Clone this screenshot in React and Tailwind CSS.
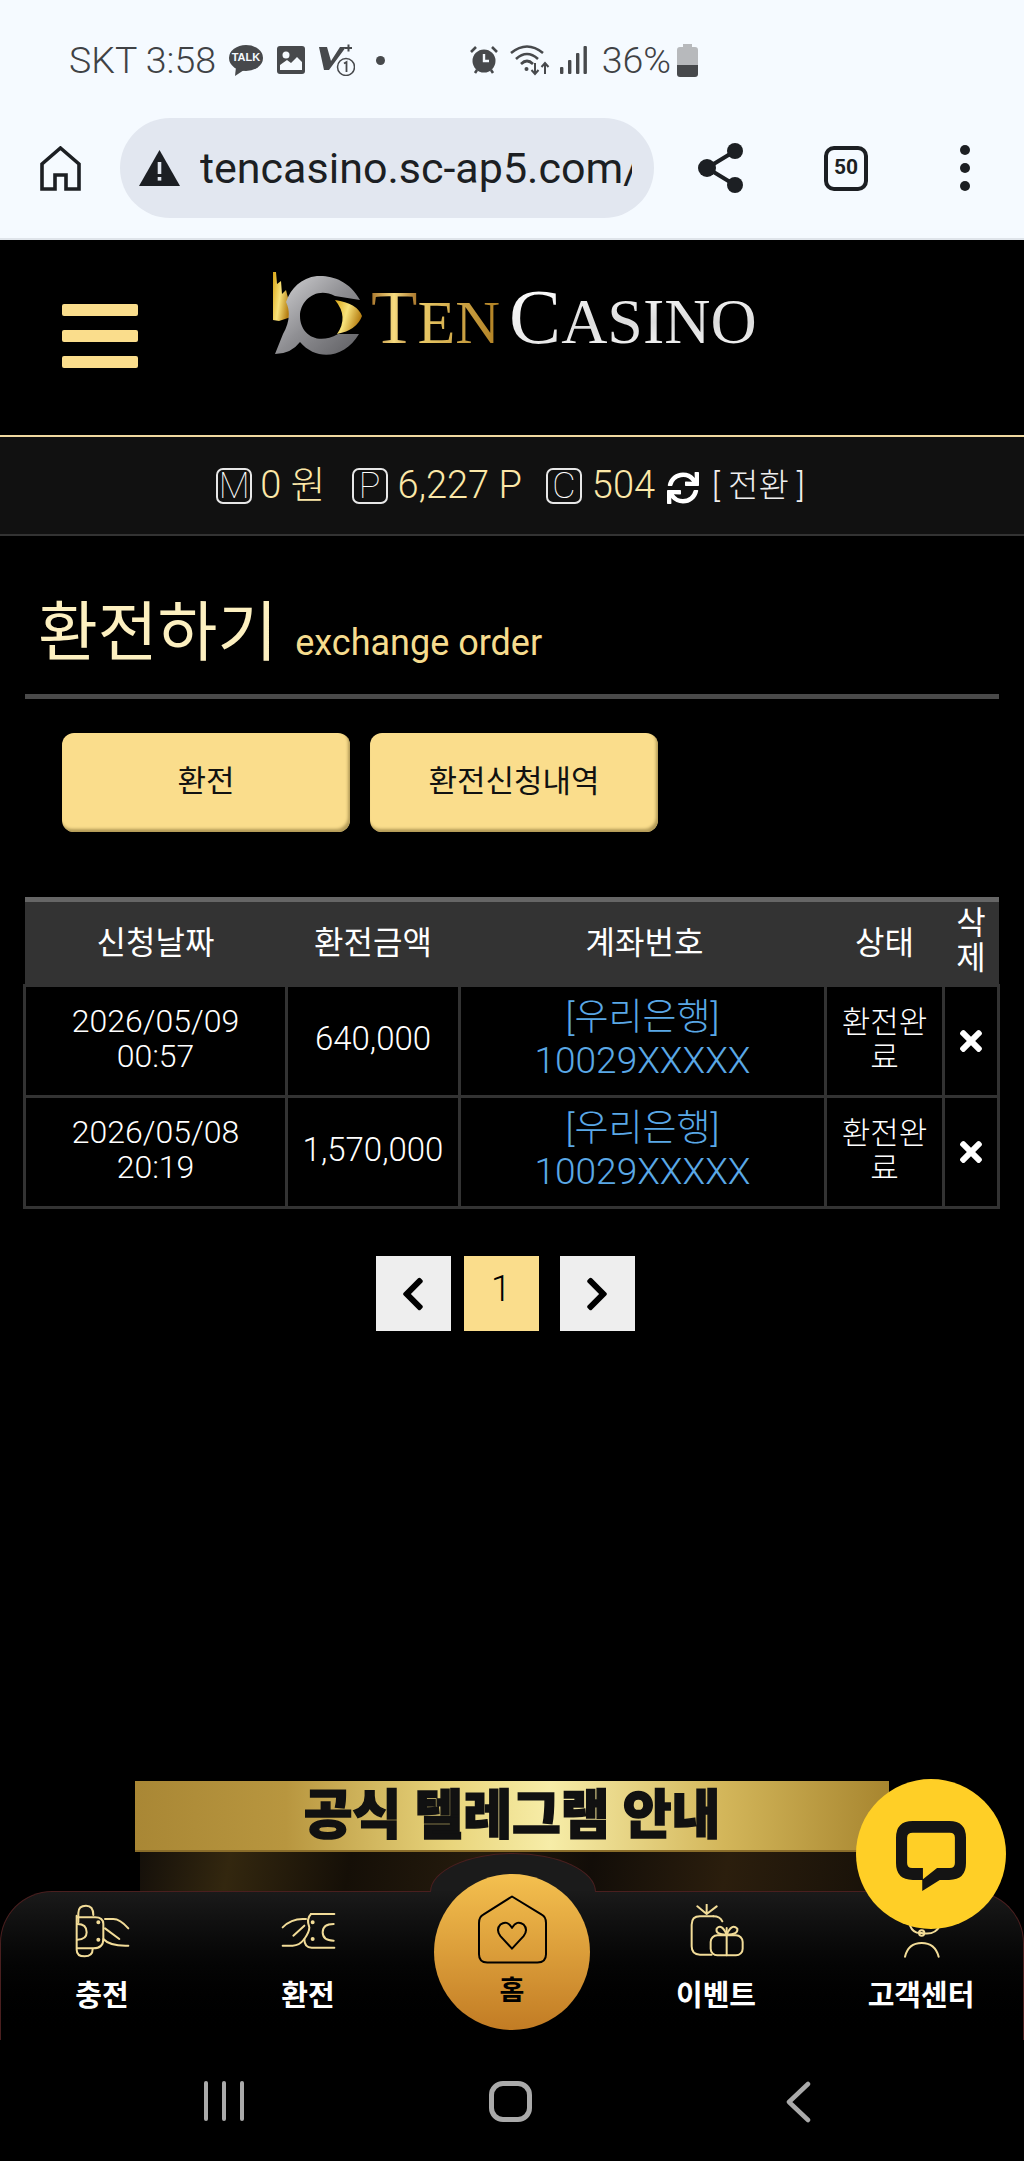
import React from "react";
import { FaSync, FaTimes, FaChevronLeft, FaChevronRight } from "react-icons/fa";

const Gold = "#f2dc98";

function KakaoIcon() {
  return (
    <div className="relative w-[34px] h-[31px] ml-[13px]">
      <svg width="34" height="31" viewBox="0 0 34 31">
        <ellipse cx="17" cy="13" rx="17" ry="13" fill="#47494c" />
        <path d="M7 22 L6 31 L15 25 Z" fill="#47494c" />
      </svg>
      <span className="absolute left-0 top-[5px] w-[34px] text-center text-[11px] leading-[15px] font-bold text-[#f5faff] font-['Liberation_Sans',sans-serif]">TALK</span>
    </div>
  );
}

function StatusLeft() {
  return (
    <div className="flex items-center">
      <span className="text-[37.500px] leading-[40px] font-light text-[#3f4245]">SKT 3:58</span>
      <KakaoIcon />
      <svg className="ml-[14px]" width="28" height="28" viewBox="0 0 28 28">
        <rect width="28" height="28" rx="3" fill="#47494c" />
        <circle cx="9" cy="9" r="3.5" fill="#f5faff" />
        <path d="M3 24 V19 L10 14 L14 17 L20 11 L25 16 V24 Z" fill="#f5faff" />
      </svg>
      <svg className="ml-[14px]" width="36" height="32" viewBox="0 0 36 32">
        <path d="M0 3 H8 L12 17 L21 3 H27 L10 26 H5 Z" fill="#47494c" />
        <path d="M26 4 H33 M29.5 0.5 V7.500" stroke="#47494c" strokeWidth="2" />
        <circle cx="27" cy="23" r="8.500" fill="#f5faff" stroke="#47494c" strokeWidth="1.5" />
        <path d="M25 19.500 L27.500 18 V28" stroke="#47494c" strokeWidth="1.8" fill="none" />
      </svg>
      <span className="ml-[21px] w-[9px] h-[9px] rounded-full bg-[#47494c]" />
    </div>
  );
}

function StatusRight() {
  return (
    <div className="flex items-center">
      <svg width="30" height="30" viewBox="0 0 30 30">
        <circle cx="15" cy="16" r="11.5" fill="#47494c" />
        <path d="M15 9 V16 H20" stroke="#f5faff" strokeWidth="2.4" fill="none" />
        <path d="M2 7 L7 2 M28 7 L23 2 M6 28 L8 25 M24 28 L22 25" stroke="#47494c" strokeWidth="2.6" />
      </svg>
      <svg className="ml-[11px]" width="40" height="32" viewBox="0 0 40 32">
        <path d="M1 9 Q17 -4 33 9" stroke="#47494c" strokeWidth="2.6" fill="none" />
        <path d="M6 15 Q17 5 28 15" stroke="#47494c" strokeWidth="2.6" fill="none" />
        <path d="M11 20 Q17 14 23 20" stroke="#47494c" strokeWidth="2.6" fill="none" />
        <circle cx="16.500" cy="25" r="2" fill="#47494c" />
        <path d="M25 19 V30 M21.500 26 L25 30 L28.500 26 M35 30 V19 M31.500 23 L35 19 L38.500 23" stroke="#47494c" strokeWidth="2" fill="none" />
      </svg>
      <svg className="ml-[10px]" width="27" height="29" viewBox="0 0 27 29">
        <rect x="0" y="21" width="3.400" height="7" rx="1" fill="#47494c" />
        <rect x="8" y="14" width="3.400" height="14" rx="1" fill="#47494c" />
        <rect x="16" y="7" width="3.400" height="21" rx="1" fill="#47494c" />
        <rect x="23.500" y="0" width="3.400" height="28" rx="1" fill="#47494c" />
      </svg>
      <span className="ml-[15px] text-[37.500px] leading-[40px] font-light text-[#3f4245]">36%</span>
      <svg className="ml-[6px]" width="21" height="33" viewBox="0 0 21 33">
        <path d="M6 0 H15 V3 H18 Q21 3 21 6 V21 H0 V6 Q0 3 3 3 H6 Z" fill="#b7b9bc" />
        <path d="M0 21 H21 V30 Q21 33 18 33 H3 Q0 33 0 30 Z" fill="#47494c" />
      </svg>
    </div>
  );
}

function BrowserBar() {
  return (
    <div className="flex items-center h-[100px] mt-[38px]">
      <svg className="ml-[40px]" width="41" height="45" viewBox="0 0 41 45">
        <path d="M20.500 2 L39 18 V43 H26 V29 H15 V43 H2 V18 Z" fill="none" stroke="#1c1f23" strokeWidth="3.600" strokeLinejoin="miter" />
      </svg>
      <div className="ml-[39px] w-[534px] h-[100px] rounded-[50px] bg-[#e2e7f0] flex items-center pl-[19px] pr-[19px] overflow-hidden">
        <svg className="shrink-0" width="41" height="36" viewBox="0 0 41 36">
          <path d="M20.500 0 L41 36 H0 Z" fill="#1c1f23" />
          <rect x="18.700" y="12" width="3.600" height="12" fill="#e2e7f0" />
          <rect x="18.700" y="27" width="3.600" height="3.600" fill="#e2e7f0" />
        </svg>
        <div className="ml-[20px] w-[432px] overflow-hidden whitespace-nowrap text-[43px] leading-[60px] text-[#1c1f23]">tencasino.sc-ap5.com/</div>
      </div>
      <svg className="ml-[44px]" width="46" height="50" viewBox="0 0 46 50">
        <path d="M37 8 L9 25 L37 42" fill="none" stroke="#1c1f23" strokeWidth="4" />
        <circle cx="37" cy="8" r="8" fill="#1c1f23" />
        <circle cx="9" cy="25" r="9" fill="#1c1f23" />
        <circle cx="37" cy="42" r="8" fill="#1c1f23" />
      </svg>
      <div className="ml-[80px] w-[44px] h-[45px] rounded-[10px] border-[4px] border-[#1c1f23] flex items-center justify-center text-[21px] font-bold text-[#1c1f23]">50</div>
      <div className="ml-[92px] flex flex-col gap-[8px]">
        <span className="w-[10px] h-[10px] rounded-full bg-[#1c1f23]" />
        <span className="w-[10px] h-[10px] rounded-full bg-[#1c1f23]" />
        <span className="w-[10px] h-[10px] rounded-full bg-[#1c1f23]" />
      </div>
    </div>
  );
}

function Logo() {
  return (
    <div className="flex items-start ml-[135px] mt-[32px]">
      <svg width="92" height="86" viewBox="0 0 92 86">
        <defs>
          <linearGradient id="lg" x1="0" y1="0" x2="1" y2="0.4">
            <stop offset="0" stopColor="#d9a514" />
            <stop offset="0.5" stopColor="#f8e27a" />
            <stop offset="1" stopColor="#b57e12" />
          </linearGradient>
          <linearGradient id="lgs" x1="0" y1="0" x2="1" y2="1">
            <stop offset="0" stopColor="#d6d6d8" />
            <stop offset="0.5" stopColor="#8f8f93" />
            <stop offset="1" stopColor="#5d5d61" />
          </linearGradient>
        </defs>
        <path d="M0 0 L3 0 L4 12 L8 9 L9 22 L13 18 C16 30 18 34 18 45 L6 49 L0 48 Z" fill="url(#lg)" />
        <path d="M87 28 C76 8 58 3 44 4 C28 6 18 16 13 30 C18 40 16 52 10 62 L2 82 Q18 82 27 70 C44 90 72 86 86 62 L65 62 C44 74 27 62 27 44 C27 28 44 14 62 24 Z" fill="url(#lgs)" />
        <path d="M62 28 Q84 31 89 44 Q84 58 64 62 Q76 45 62 28 Z" fill="url(#lg)" />
      </svg>
      <div className="ml-[6px] mt-[5px] flex items-baseline font-['Liberation_Serif',serif] whitespace-nowrap leading-[80px]">
        <span className="text-[76px] leading-[80px] bg-gradient-to-r from-[#a8752a] via-[#f7dc80] to-[#a8752a] bg-clip-text text-transparent">T</span>
        <span className="text-[62px] leading-[80px] bg-gradient-to-r from-[#eccd6a] to-[#b07f20] bg-clip-text text-transparent">EN</span>
        <span className="ml-[9px] text-[78px] leading-[80px] bg-gradient-to-b from-[#ffffff] to-[#e4e4e4] bg-clip-text text-transparent">C</span>
        <span className="text-[64px] leading-[80px] bg-gradient-to-b from-[#ffffff] via-[#dcdcdc] to-[#ffffff] bg-clip-text text-transparent">ASINO</span>
      </div>
    </div>
  );
}

function Header() {
  return (
    <div className="flex items-start h-[195px] bg-black">
      <div className="ml-[62px] mt-[64px] flex flex-col gap-[14px]">
        <span className="block w-[76px] h-[12px] rounded-[2px] bg-[#fadd8c]" />
        <span className="block w-[76px] h-[12px] rounded-[2px] bg-[#fadd8c]" />
        <span className="block w-[76px] h-[12px] rounded-[2px] bg-[#fadd8c]" />
      </div>
      <Logo />
    </div>
  );
}

function Badge({ c }) {
  return <span className="w-[36px] h-[36px] rounded-[7px] border-2 border-white/90 flex items-center justify-center text-[36px] font-thin text-white leading-none font-['Roboto',sans-serif]">{c}</span>;
}

function Balance() {
  return (
    <div className="flex items-center justify-center h-[101px] border-t-2 border-b-2 border-t-[#f0d9a0] border-b-[#333333] bg-[#111111] pr-[3px]">
      <Badge c="M" />
      <span className="ml-[8px] text-[38px] font-light text-[#fce8a8] whitespace-nowrap">0 원</span>
      <span className="ml-[26px]"><Badge c="P" /></span>
      <span className="ml-[10px] text-[38px] font-light text-[#fce8a8] whitespace-nowrap">6,227 P</span>
      <span className="ml-[24px]"><Badge c="C" /></span>
      <span className="ml-[10px] text-[38px] font-light text-[#fce8a8]">504</span>
      <FaSync className="ml-[12px] mt-[5px] text-white" size={32} />
      <span className="ml-[13px] text-[33px] font-light text-[#eeeeee] whitespace-nowrap">[ 전환 ]</span>
    </div>
  );
}

const rows = [
  { d: "2026/05/09", t: "00:57", a: "640,000" },
  { d: "2026/05/08", t: "20:19", a: "1,570,000" },
];

function Table() {
  return (
    <table className="ml-[23px] mt-[65px] w-[974px] table-fixed border-collapse text-white">
      <colgroup>
        <col className="w-[262px]" />
        <col className="w-[173px]" />
        <col className="w-[366px]" />
        <col className="w-[118px]" />
        <col className="w-[55px]" />
      </colgroup>
      <thead>
        <tr className="bg-[#333333] border-t-[5px] border-t-[#666666] h-[86px] text-[32px] leading-[38px] font-normal">
          <th className="font-normal">신청날짜</th>
          <th className="font-normal">환전금액</th>
          <th className="font-normal pl-[4px]">계좌번호</th>
          <th className="font-normal">상태</th>
          <th className="font-normal break-all leading-[35px] px-[10px] pb-[4px]">삭제</th>
        </tr>
      </thead>
      <tbody>
        {rows.map((r) => (
          <tr key={r.d} className="h-[111px]">
            <td className="border-[3px] border-[#333333] text-center text-[32px] leading-[35px] font-light pb-[5px]">{r.d}<br />{r.t}</td>
            <td className="border-[3px] border-[#333333] text-center text-[33px] font-light pb-[5px]">{r.a}</td>
            <td className="border-[3px] border-[#333333] text-center text-[37px] leading-[43px] font-light text-[#5aa8e6] pb-[5px]">[우리은행]<br />10029XXXXX</td>
            <td className="border-[3px] border-[#333333] text-center text-[31px] leading-[35px] font-light break-all px-[10px] pb-[3px]">환전완료</td>
            <td className="border-[3px] border-[#333333]"><FaTimes className="mx-auto text-white" size={32} /></td>
          </tr>
        ))}
      </tbody>
    </table>
  );
}

function Pagination() {
  return (
    <div className="flex justify-center mt-[47px] pr-[14px]">
      <div className="w-[75px] h-[75px] bg-[#eeeeee] flex items-center justify-center"><FaChevronLeft size={38} className="text-black" /></div>
      <div className="ml-[13px] w-[75px] h-[75px] bg-[#fadd8c] flex justify-center pt-[8px] text-[36px] leading-[50px] font-light text-black">1</div>
      <div className="ml-[21px] w-[75px] h-[75px] bg-[#eeeeee] flex items-center justify-center"><FaChevronRight size={38} className="text-black" /></div>
    </div>
  );
}

function NavIcon({ children, vb, w = 55, h = 55 }) {
  return (
    <svg width={w} height={h} viewBox={vb} fill="none" stroke={Gold} strokeWidth="6" strokeLinecap="round" strokeLinejoin="round">{children}</svg>
  );
}

function NavItem({ icon, label, x }) {
  return (
    <div className={`flex flex-col items-center w-[180px] ${x}`}>
      <div className="h-[55px] flex items-center justify-center">{icon}</div>
      <span className="mt-[20px] text-[29px] leading-[34px] font-bold text-white whitespace-nowrap">{label}</span>
    </div>
  );
}

function BottomNav() {
  return (
    <div className="absolute left-0 bottom-0 w-[1024px] h-[149px] rounded-t-[52px] border border-b-0 border-[#4a1f1f] bg-gradient-to-b from-[#1a1a1a] to-[#000000]">
      <div className="absolute left-[429px] top-[-39px] w-[166px] h-[39px] rounded-tl-[83px_39px] rounded-tr-[83px_39px] border border-b-0 border-[#4a1f1f] bg-[#1b1b1b]" />
      <div className="absolute left-[430px] top-[-1px] w-[164px] h-[2px] bg-[#1a1a1a]" />
      <div className="relative flex pt-[12px]">
        <NavItem
          x="ml-[11px]"
          label="충전"
          icon={
            <NavIcon vb="45 45 165 165">
              <path d="M55 100 V72 Q55 50 78 50 Q100 50 100 78" />
              <path d="M50 80 V182 Q50 202 74 202 Q98 202 98 180" />
              <path d="M52 85 H105 Q130 85 130 105 V150 Q130 178 100 178 H52" />
              <path d="M52 105 Q80 105 80 130 Q80 152 52 152" />
              <circle cx="115" cy="100" r="3" fill={Gold} />
              <circle cx="115" cy="152" r="3" fill={Gold} />
              <path d="M135 90 H160 Q180 90 205 118" />
              <path d="M135 118 L178 150" />
              <path d="M130 150 Q150 172 205 170" />
            </NavIcon>
          }
        />
        <NavItem
          x="ml-[26px]"
          label="환전"
          icon={
            <NavIcon vb="660 45 165 165">
              <path d="M750 75 H820" />
              <path d="M820 176 H752 Q730 176 730 150 Q745 130 745 115 Q735 90 750 75" />
              <circle cx="755" cy="100" r="3" fill={Gold} />
              <circle cx="755" cy="150" r="3" fill={Gold} />
              <path d="M818 105 Q785 105 785 130 Q785 155 818 155" />
              <path d="M665 115 Q690 90 725 90 H735" />
              <path d="M697 140 L730 110" />
              <path d="M665 170 H695 Q715 170 730 150" />
            </NavIcon>
          }
        />
        <NavItem
          x="ml-[228px]"
          label="이벤트"
          icon={
            <NavIcon vb="687 78 165 165">
              <path d="M760 115 H720 Q695 115 695 140 V205 Q695 230 720 230 H755" />
              <path d="M760 115 Q780 115 787 130" />
              <path d="M740 108 L712 85 M740 108 L740 80 M740 108 L770 85" />
              <rect x="752" y="172" width="96" height="60" rx="20" />
              <path d="M800 150 V232" />
              <path d="M800 170 Q765 170 770 152 Q785 135 800 170 Q835 170 832 152 Q815 135 800 170" />
            </NavIcon>
          }
        />
        <NavItem
          x="ml-[25px]"
          label="고객센터"
          icon={
            <NavIcon vb="102 375 165 165">
              <path d="M150 440 Q160 465 185 462 Q225 470 240 440" />
              <circle cx="185" cy="462" r="8" />
              <path d="M135 533 Q145 492 185 492 Q225 492 236 533" />
            </NavIcon>
          }
        />
      </div>
      <div className="absolute left-[433px] top-[-18px] w-[156px] h-[156px] rounded-full bg-gradient-to-b from-[#f4c04f] to-[#c27c24] flex flex-col items-center pt-[21px]">
        <svg width="69" height="69" viewBox="52 46 209 208" fill="none" stroke="#000" strokeWidth="6" strokeLinejoin="round">
          <path d="M155 50 L245 105 Q258 112 258 130 V225 Q258 250 232 250 H80 Q55 250 55 225 V130 Q55 112 68 105 Z" />
          <path d="M155 208 L120 170 Q105 150 120 135 Q140 120 155 145 Q170 120 190 135 Q205 150 190 170 Z" />
        </svg>
        <span className="mt-[10px] text-[27px] leading-[34px] font-bold text-black">홈</span>
      </div>
    </div>
  );
}

function ChatButton() {
  return (
    <div className="absolute left-[856px] top-[-2px] w-[150px] h-[150px] rounded-full bg-[#ffcf26] flex items-center justify-center">
      <svg width="70" height="70" viewBox="110 125 208 208" className="mt-[3px]">
        <path
          fillRule="evenodd"
          fill="#141414"
          d="M160 125 H268 Q318 125 318 175 V250 Q318 300 268 300 H240 L188 333 V300 H160 Q110 300 110 250 V175 Q110 125 160 125 Z M160 160 H270 Q285 160 285 175 V250 Q285 265 270 265 H232 L190 298 V265 H158 Q143 265 143 250 V175 Q143 160 160 160 Z"
        />
      </svg>
    </div>
  );
}

function Banner() {
  return (
    <div className="ml-[135px] w-[754px] h-[110px] overflow-hidden">
      <div className="h-[71px] border-b-2 border-[#8a6d2a] bg-[linear-gradient(90deg,#a98735_0%,#b8963f_20%,#e9d57c_42%,#f7eda8_55%,#d3b65a_78%,#a7852f_100%)] flex items-center justify-center">
        <span className="text-[53px] leading-[60px] font-black text-[#111111] whitespace-nowrap blur-[0.6px] [-webkit-text-stroke:1.5px_#111111]">공식 텔레그램 안내</span>
      </div>
      <div className="ml-[5px] h-[39px] bg-[linear-gradient(100deg,#15100a_0%,#33270f_12%,#150f07_28%,#251b0d_45%,#120d08_60%,#2b1e0d_78%,#161008_100%)]" />
    </div>
  );
}

function SystemNav() {
  return (
    <div className="flex items-start h-[121px] bg-black pt-[41px]">
      <div className="ml-[204px] flex gap-[14px]">
        <span className="block w-[4px] h-[40px] rounded-[2px] bg-[#aaaaaa]" />
        <span className="block w-[4px] h-[40px] rounded-[2px] bg-[#aaaaaa]" />
        <span className="block w-[4px] h-[40px] rounded-[2px] bg-[#aaaaaa]" />
      </div>
      <div className="ml-[245px] w-[43px] h-[41px] rounded-[14px] border-[5px] border-[#aaaaaa]" />
      <svg className="ml-[254px]" width="25" height="42" viewBox="0 0 25 42" fill="none" stroke="#aaaaaa" strokeWidth="4.500" strokeLinecap="round" strokeLinejoin="round">
        <path d="M22 3 L3 21 L22 39" />
      </svg>
    </div>
  );
}

export default function App() {
  return (
    <div className="relative w-[1024px] h-[2161px] overflow-hidden bg-black font-[Roboto,'Noto_Sans_CJK_KR',sans-serif]">
      <div className="h-[240px] bg-[#f5faff] border-b-2 border-[#dfe4ea] pt-[40px]">
        <div className="flex items-center justify-between h-[40px] pl-[69px] pr-[326px]">
          <StatusLeft />
          <StatusRight />
        </div>
        <BrowserBar />
      </div>
      <Header />
      <Balance />
      <div className="flex items-baseline ml-[38px] h-[158px] pt-[57px]">
        <span className="text-[65px] leading-[80px] text-[#fdf0c0]">환전하기</span>
        <span className="ml-[18px] text-[36px] text-[#f6dc8e]">exchange order</span>
      </div>
      <div className="ml-[25px] w-[974px] h-[5px] bg-[#4a4a4a]" />
      <div className="flex ml-[62px] mt-[34px] gap-[20px]">
        <div className="w-[288px] h-[99px] rounded-[12px] bg-[#fadd8c] shadow-[inset_-2px_-3px_3px_#b39b58] flex items-center justify-center text-[31px] text-[#111111]">환전</div>
        <div className="w-[288px] h-[99px] rounded-[12px] bg-[#fadd8c] shadow-[inset_-2px_-3px_3px_#b39b58] flex items-center justify-center text-[31px] text-[#111111]">환전신청내역</div>
      </div>
      <Table />
      <Pagination />
      <div className="absolute left-0 top-[1781px] w-[1024px] h-[259px]">
        <Banner />
        <BottomNav />
        <ChatButton />
      </div>
      <div className="absolute left-0 bottom-0 w-[1024px]">
        <SystemNav />
      </div>
    </div>
  );
}
